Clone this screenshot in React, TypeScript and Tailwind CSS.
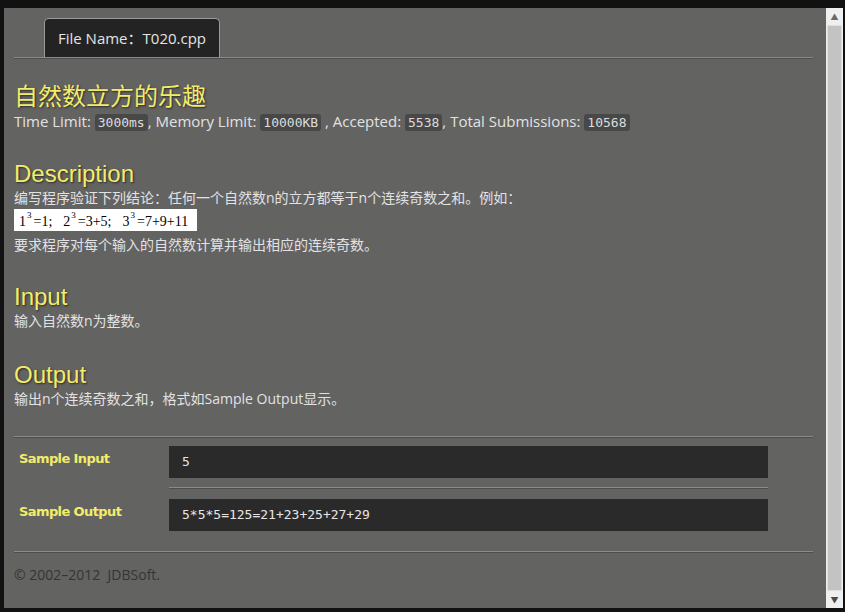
const sans = { fontFamily: '"Open Sans", "Noto Sans CJK SC", sans-serif' };

function Chip({ children }: { children: React.ReactNode }) {
  return (
    <code className="rounded-[3px] bg-[#484848] px-[3px] py-[1px] font-['DejaVu_Sans_Mono',monospace] text-[13px] text-[#dcdcdc]">
      {children}
    </code>
  );
}

function Heading({ children }: { children: React.ReactNode }) {
  return (
    <h2 className="font-['Liberation_Sans','Noto_Sans_CJK_SC',sans-serif] text-[24px] leading-[30px] text-[#f2ec6a] [text-shadow:1px_1px_2px_#2a2a2a]">
      {children}
    </h2>
  );
}

function Rule({ className = '' }: { className?: string }) {
  return <div className={`h-[2px] border-t border-[#8a8a8a] bg-[#4e4e4e] ${className}`} />;
}

function SampleRow({ label, value }: { label: string; value: string }) {
  return (
    <div className="flex">
      <div className="w-[155px] pl-[5px] pt-[3px] font-['DejaVu_Sans',sans-serif] text-[13px] font-bold tracking-[-0.6px] text-[#f2ec6a]">
        {label}
      </div>
      <div className="flex h-[32px] w-[599px] items-center bg-[#2a2a2a] px-[13px] font-['DejaVu_Sans_Mono',monospace] text-[13px] text-[#e6e6e6]">
        {value}
      </div>
    </div>
  );
}

function Cube({ n }: { n: string }) {
  return (
    <>
      {n}
      <span className="relative -top-[5px] ml-[1px] mr-[2px] text-[9px]">3</span>
    </>
  );
}

export default function App() {
  return (
    <div className="flex h-screen bg-[#121212] pb-[4px] pl-[4px] pr-[2px] pt-[8px]" style={sans}>
      <div className="flex flex-1 overflow-hidden bg-[#636362]">
        <main className="flex-1 pl-[10px] pr-[13px] pt-[10px] text-[#e2e2e2]">
          <div className="ml-[30px] flex h-[39px] w-[176px] items-center justify-center rounded-t-[5px] border border-b-0 border-[#9a9a9a] bg-[#232323] text-[15px] text-[#e4e4e4]">
            File Name：T020.cpp
          </div>
          <Rule />

          <h1 className="mt-[22px] text-[24px] leading-[30px] text-[#f2ec6a] [text-shadow:1px_1px_2px_#2a2a2a]">
            自然数立方的乐趣
          </h1>
          <p className="text-[15px] leading-[20px]">
            Time Limit: <Chip>3000ms</Chip>, Memory Limit: <Chip>10000KB</Chip> , Accepted: <Chip>5538</Chip>, Total
            Submissions: <Chip>10568</Chip>
          </p>

          <div className="mt-[26px]">
            <Heading>Description</Heading>
          </div>
          <p className="text-[14px] leading-[18px]">编写程序验证下列结论：任何一个自然数n的立方都等于n个连续奇数之和。例如：</p>
          <div className="mt-[2px] flex h-[22px] w-[183px] items-center overflow-hidden whitespace-nowrap bg-white pl-[5px] pt-[2px] font-['Liberation_Serif',serif] text-[14px] text-black">
            <Cube n="1" />=1;<span className="w-[11px]" />
            <Cube n="2" />=3+5;<span className="w-[11px]" />
            <Cube n="3" />=7+9+11
          </div>
          <p className="mt-[5px] text-[14px] leading-[18px]">要求程序对每个输入的自然数计算并输出相应的连续奇数。</p>

          <div className="mt-[28px]">
            <Heading>Input</Heading>
          </div>
          <p className="text-[14px] leading-[18px]">输入自然数n为整数。</p>

          <div className="mt-[30px]">
            <Heading>Output</Heading>
          </div>
          <p className="text-[14px] leading-[18px]">输出n个连续奇数之和，格式如Sample Output显示。</p>

          <Rule className="mt-[28px]" />
          <div className="mt-[8px]">
            <SampleRow label="Sample Input" value="5" />
            <div className="ml-[155px] mt-[9px] w-[599px]">
              <Rule />
            </div>
            <div className="mt-[10px]">
              <SampleRow label="Sample Output" value="5*5*5=125=21+23+25+27+29" />
            </div>
          </div>
          <Rule className="mt-[20px]" />
          <p className="mt-[11px] text-[14px] text-[#353535]">© 2002–2012&nbsp; JDBSoft.</p>
        </main>

        <div className="flex w-[17px] flex-col bg-[#efefef]">
          <div className="flex h-[17px] items-center justify-center text-[8px] text-[#6a6a6a]">▲</div>
          <div className="mx-[1px] flex-1 border border-[#e0e0e0] bg-[#c3c3c3]" />
          <div className="flex h-[17px] items-center justify-center text-[8px] text-[#4a4a4a]">▼</div>
        </div>
      </div>
    </div>
  );
}
